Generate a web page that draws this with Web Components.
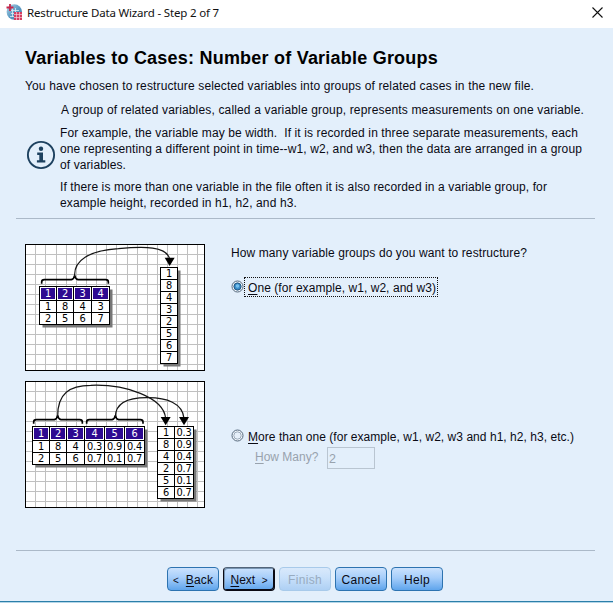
<!DOCTYPE html>
<html lang="en">
<head>
<meta charset="utf-8">
<title>Restructure Data Wizard</title>
<style>
html,body{margin:0;height:100%;overflow:hidden;background:#e3effb}
body{font:12px "Liberation Sans",Arial,sans-serif;color:#0a0a14}
</style>
</head>
<body>
<restructure-wizard></restructure-wizard>
<script>
function define(name, html, setup) {
  const t = document.createElement('template');
  t.innerHTML = html;
  customElements.define(name, class extends HTMLElement {
    connectedCallback() {
      if (this.shadowRoot) return;
      this.attachShadow({mode: 'open'}).append(t.content.cloneNode(true));
      if (setup) setup(this, this.shadowRoot);
    }
  });
}

/* One line of text whose letter spacing is set so that it spans `span` pixels. */
define('text-line', `<style>
:host{display:block;white-space:pre;line-height:16px;height:16px}
::slotted(u){text-underline-offset:2px;text-decoration-thickness:1px;text-decoration-skip-ink:none}
span{display:inline-block}
</style><span><slot></slot></span>`, (host, root) => {
  const s = root.querySelector('span');
  const span = +host.getAttribute('span');
  if (span) s.style.letterSpacing = (span - s.getBoundingClientRect().width) / host.textContent.length + 'px';
});

define('title-bar', `<style>
:host{display:flex;align-items:flex-start;height:28px;background:#fff;color:#111;padding:0 10px 0 6px;box-sizing:border-box;font-family:"Noto Sans","Open Sans",sans-serif;font-size:11.5px}
.logo{margin:4px 5px 0 0;flex:none}
.x{margin:7px 0 0 auto;flex:none}
text-line{margin-top:5px}
</style>
<svg class="logo" width="16" height="16" viewBox="0 0 16 16">
<defs><linearGradient id="g" x2="1" y2="1"><stop stop-color="#b8d6e8"/><stop offset=".5" stop-color="#5d9cc4"/><stop offset="1" stop-color="#3978a8"/></linearGradient></defs>
<circle cx="8.3" cy="8" r="7.700" fill="url(#g)"/>
<path d="M5 6.5H13M5 9.5H9M4 12.5H8M6.500 4V13M9.500 4V8" stroke="#deedf5" stroke-width=".8"/>
<path d="M4 0V7M0.500 3.500H7.500" stroke="#c5274c" stroke-width="1.800"/>
<rect x="8" y="8" width="8" height="8" fill="#d33e62"/>
<path d="M8 10.500H16M8 13.500H16M10.500 8V16M13.500 8V16" stroke="#f3cbd5" stroke-width=".7"/>
</svg>
<text-line span="192">Restructure Data Wizard - Step 2 of 7</text-line>
<svg class="x" width="11" height="11" viewBox="0 0 11 11"><path d="M.5.5 10.500 10.500M10.500.5.5 10.500" stroke="#111" stroke-width="1.100"/></svg>`);

define('info-note', `<style>
:host{display:grid;grid-template-columns:35px 1fr;align-items:start}
svg{display:block;margin:38px 0 0 1px}
.t{display:flex;flex-direction:column}
</style>
<svg width="30" height="30" viewBox="0 0 30 30"><circle cx="15" cy="15" r="13.100" fill="none" stroke="#1d415f" stroke-width="1.900"/><circle cx="15" cy="8.700" r="2.200" fill="#1d415f"/><path d="M11.200 12.600H17V20.200H19.300V22.600H10.900V20.200H13.300V15H11.200Z" fill="#1d415f"/></svg>
<div class="t"><slot></slot></div>`);

/* Diagrams use three units per pixel. */
const NUM = (x, y, s, c = '#000') => `<text x="${x}" y="${y}" fill="${c}">${s}</text>`;
function table(xs, ys, rows, head) {
  const x0 = xs[0], x1 = xs.at(-1), y0 = ys[0], y1 = ys.at(-1);
  let o = `<rect x="${x0 + 9}" y="${y0 + 9}" width="${x1 - x0}" height="${y1 - y0}" fill="#777"/><rect x="${x0}" y="${y0}" width="${x1 - x0}" height="${y1 - y0}" fill="#fff"/>`;
  if (head) for (let i = 0; i < xs.length - 1; i++)
    o += `<rect x="${xs[i] + 4.500}" y="${y0 + 4.500}" width="${xs[i + 1] - xs[i] - 9}" height="${ys[1] - y0 - 9}" fill="#2e0a91"/>`;
  o += `<path shape-rendering="crispEdges" fill="none" stroke="#000" stroke-width="3" d="${xs.map(x => `M${x} ${y0 - 1.5}V${y1 + 1.5}`).join('')}${ys.map(y => `M${x0} ${y}H${x1}`).join('')}"/>`;
  rows.forEach((r, j) => r.forEach((v, i) => o += NUM((xs[i] + xs[i + 1]) / 2, (ys[j] + ys[j + 1]) / 2 + 10.500, v, head && !j ? '#fff' : '#000')));
  return o;
}
function brace(a, m, b, y) {
  return `<path fill="none" stroke="#000" stroke-width="5" d="M${a} ${y}V${y - 5}Q${a} ${y - 12} ${a + 8} ${y - 12}H${m - 10}Q${m - 2} ${y - 14} ${m} ${y - 25}Q${m + 2} ${y - 14} ${m + 10} ${y - 12}H${b - 8}Q${b} ${y - 12} ${b} ${y - 5}V${y}"/>`;
}
function arrow(d, x, y) {
  return `<path d="${d}" fill="none" stroke="#151515" stroke-width="3.600"/><path d="M${x - 15} ${y - 25}H${x + 15}L${x} ${y}Z"/>`;
}
define('group-diagram', `<style>
:host{display:block;width:180px;height:127px}
svg{display:block;font-family:"DejaVu Sans",Verdana,sans-serif;font-size:29.500px;text-anchor:middle;letter-spacing:-.8px}
</style><div></div>`, (host, root) => {
  const many = host.getAttribute('kind') === 'many';
  const top = many ? 18 : 12;
  let g = '';
  for (let i = 0; i < 17; i++) g += `M${Math.round((46 + i * 30.400) / 3) * 3 + 1.5} ${top}V${top + 381}`;
  for (let i = 0; i < 12; i++) g += `M15 ${top + 31.5 + i * 30}H555`;
  const body = many
    ? table([37.5, 88.5, 139.5, 193.5, 253.500, 313.500, 373.500], [154.500, 196.500, 232.500, 268.500], [[1,2,3,4,5,6],[1,8,4,'0.3','0.9','0.4'],[2,5,6,'0.7','0.1','0.7']], true)
      + table([412.500, 463.500, 520.500], [154.500, 190.500, 226.500, 262.500, 298.500, 334.500, 370.500], [[1,'0.3'],[8,'0.9'],[4,'0.4'],[2,'0.7'],[5,'0.1'],[6,'0.7']])
      + brace(41, 113, 187, 146) + brace(200, 286, 369, 146)
      + arrow('M113 125C112 55 150 31 212 31C315 27 431 66 437 130', 437, 151)
      + arrow('M286 125C287 85 320 68 380 68C440 67 488 85 492 130', 492, 151)
    : table([58.500, 109.500, 160.500, 214.500, 268.500], [139.500, 181.500, 217.500, 253.500], [[1,2,3,4],[1,8,4,3],[2,5,6,7]], true)
      + table([421.500, 472.500], [82.500, 118.500, 154.500, 190.500, 226.500, 262.500, 298.500, 334.500, 370.500], [[1],[8],[4],[3],[2],[5],[6],[7]])
      + brace(65, 164, 265, 131)
      + arrow('M164 110C160 60 208 32 295 26C368 19 445 17 449 60', 449, 78);
  root.querySelector('div').innerHTML = `<svg width="180" height="127" viewBox="15 ${top} 540 381"><rect x="15" y="${top}" width="540" height="381" fill="#fff"/><path shape-rendering="crispEdges" d="${g}" stroke="#c0c0c0" stroke-width="3"/>${body}<rect x="16.500" y="${top + 1.5}" width="537" height="378" fill="none" stroke="#000" stroke-width="3"/></svg>`;
});

define('radio-option', `<style>
:host{display:flex;align-items:flex-start;height:20px}
svg{flex:none;margin:3px 0 0 0}
.l{box-sizing:border-box;height:20px;padding:2px 0 0 3px;margin-left:0;border:1px solid transparent}
:host([focused]) .l{border:1px dotted #111;width:194px}
.d{display:none}
:host([checked]) .d{display:inline}
</style>
<svg width="13" height="13" viewBox="0 0 13 13"><circle cx="6.500" cy="6.500" r="5.500" fill="#f4f9fe" stroke="#53677b" stroke-width="1"/><circle cx="6.500" cy="6.500" r="3.700" fill="#e6f0fa" stroke="#8797a7" stroke-width=".8"/><g class="d"><circle cx="6.500" cy="6.500" r="3.500" fill="#3c8fcb" stroke="#1b527f" stroke-width=".9"/><circle cx="6.500" cy="6" r="1.700" fill="#77c2ee"/></g></svg>
<div class="l"><slot></slot></div>`);

define('count-field', `<style>
:host{display:flex;align-items:flex-start;color:#98a2ad}
.b{box-sizing:border-box;width:48px;height:22px;border:1px solid #b9c5d1;padding:3px 0 0 1px;font-size:12.500px;line-height:16px;margin-left:auto}
text-line{margin-top:2px}
</style><text-line></text-line><div class="b">2</div>`, (h, r) => {
  r.querySelector('text-line').innerHTML = '<u>H</u>ow Many?';
});

define('push-button', `<style>
:host{box-sizing:border-box;display:flex;justify-content:center;width:52px;height:24px;border:1px solid #2d73b0;border-radius:4px;padding-top:4px;background:linear-gradient(#cbe2fd,#a5cdfa 45%,#5fa5ec);color:#0a0a14}
:host([default]){border:1px solid #0a0a14;border-top-color:#52657a;box-shadow:inset -1px -1px #0a0a14,inset 1px 1px #7895b2}
:host([disabled]){border-color:#a8caea;background:linear-gradient(#d9e9fb,#c8e0fa 45%,#aed0f4);color:#98abc0}
</style><slot></slot>`);

define('restructure-wizard', `<style>
:host{display:flex;flex-direction:column;height:603px;width:613px;background:#e3effb}
main{flex:1;display:flex;flex-direction:column;padding:19px 18px 0 25px}
.h{font-size:18px;font-weight:bold;color:#000;height:22px;line-height:22px}
.intro{margin-top:9px}
info-note{margin-top:8px}
.gap7{margin-top:7px}.gap6{margin-top:6px}
hr{border:0;height:1px;background:#abb9c8;margin:0 0 0 -9px;flex:none}
.one{margin-top:7px}
.choices{display:grid;grid-template-columns:180px 1fr;column-gap:26px;grid-template-rows:127px 127px;row-gap:10px;margin-top:25px}
.a{padding-top:1px}.a radio-option{margin-top:16px}
.b{padding-top:45px}
count-field{width:120px;margin:1px 0 0 24px}
.two{margin-top:42px}
.buttons{display:flex;gap:4px;margin:16px 0 0 142px}
footer{height:1px;border-top:1px solid #2b7fa9;background:#b5d6e8}
small{font-size:10px}
</style>
<title-bar></title-bar>
<main>
<text-line class="h" span="413">Variables to Cases: Number of Variable Groups</text-line>
<text-line class="intro" span="509">You have chosen to restructure selected variables into groups of related cases in the new file.</text-line>
<info-note>
<text-line span="523" style="margin-left:1px">A group of related variables, called a variable group, represents measurements on one variable.</text-line>
<text-line class="gap7" span="518">For example, the variable may be width.  If it is recorded in three separate measurements, each</text-line>
<text-line span="522">one representing a different point in time--w1, w2, and w3, then the data are arranged in a group</text-line>
<text-line span="66">of variables.</text-line>
<text-line class="gap6" span="487">If there is more than one variable in the file often it is also recorded in a variable group, for</text-line>
<text-line span="237">example height, recorded in h1, h2, and h3.</text-line>
</info-note>
<hr class="one">
<section class="choices">
<group-diagram kind="one"></group-diagram>
<div class="a"><text-line span="296">How many variable groups do you want to restructure?</text-line>
<radio-option checked focused><text-line span="188"><u>O</u>ne (for example, w1, w2, and w3)</text-line></radio-option></div>
<group-diagram kind="many"></group-diagram>
<div class="b"><radio-option><text-line span="326"><u>M</u>ore than one (for example, w1, w2, w3 and h1, h2, h3, etc.)</text-line></radio-option>
<count-field></count-field></div>
</section>
<hr class="two">
<div class="buttons">
<push-button><text-line span="40"><small>&lt;</small>  <u>B</u>ack</text-line></push-button>
<push-button default><text-line span="37"><u>N</u>ext  <small>&gt;</small></text-line></push-button>
<push-button disabled><text-line span="34">Finish</text-line></push-button>
<push-button><text-line span="39">Cancel</text-line></push-button>
<push-button><text-line span="26">Help</text-line></push-button>
</div>
</main>
<footer></footer>`);
</script>
</body>
</html>
